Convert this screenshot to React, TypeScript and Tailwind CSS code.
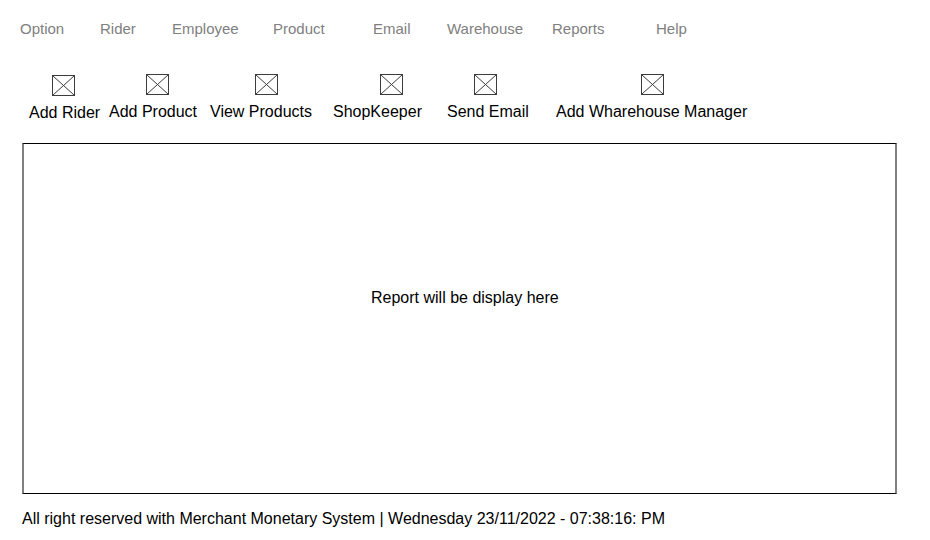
import React from 'react';

const menu = [
  { label: 'Option', w: 'w-[80px]' },
  { label: 'Rider', w: 'w-[72px]' },
  { label: 'Employee', w: 'w-[101px]' },
  { label: 'Product', w: 'w-[100px]' },
  { label: 'Email', w: 'w-[74px]' },
  { label: 'Warehouse', w: 'w-[105px]' },
  { label: 'Reports', w: 'w-[104px]' },
  { label: 'Help', w: 'w-[60px]' },
];

const tools = [
  { label: 'Add Rider', w: 'w-[80px]', icon: 'ml-[23px] mt-px', text: 'mt-[8px]' },
  { label: 'Add Product', w: 'w-[101px]', icon: 'ml-[37px]', text: 'mt-[8px]' },
  { label: 'View Products', w: 'w-[123px]', icon: 'ml-[45px]', text: 'mt-[8px]' },
  { label: 'ShopKeeper', w: 'w-[114px]', icon: 'ml-[47px]', text: 'mt-[8px]' },
  { label: 'Send Email', w: 'w-[109px]', icon: 'ml-[27px]', text: 'mt-[8px]' },
  { label: 'Add Wharehouse Manager', w: 'w-[220px]', icon: 'ml-[85px]', text: 'mt-[8px]' },
];

const MissingImage = ({ className }: { className: string }) => (
  <svg className={className} width="23" height="21" viewBox="0 0 23 21">
    <rect x="0.5" y="0.5" width="22" height="20" fill="none" stroke="#3c3c3c" />
    <line x1="1" y1="1" x2="22" y2="20" stroke="#3c3c3c" />
    <line x1="22" y1="1" x2="1" y2="20" stroke="#3c3c3c" />
  </svg>
);

const App = () => {
  return (
    <div className="w-[930px] h-[540px] bg-white overflow-hidden font-['Liberation_Sans',Arial,sans-serif]">
      <div className="flex pl-[20px] pt-[20px] text-[15px] leading-[17px] text-[#808080]">
        {menu.map((m) => (
          <div key={m.label} className={m.w}>
            {m.label}
          </div>
        ))}
      </div>

      <div className="flex pl-[29px] mt-[37px] text-[16px] leading-[18px] text-black">
        {tools.map((t) => (
          <div key={t.label} className={`${t.w} flex flex-col items-start whitespace-nowrap`}>
            <MissingImage className={t.icon} />
            <span className={t.text}>{t.label}</span>
          </div>
        ))}
      </div>

      <div className="ml-[22px] mt-[21px] w-[875px] h-[351px] border-t border-b border-t-black border-b-black border-l-2 border-r-2 border-l-[#808080] border-r-[#808080] pt-[145px] pl-[347px] text-[16px] leading-[18px] text-black">
        Report will be display here
      </div>

      <div className="pl-[22px] mt-[16px] text-[16px] leading-[18px] text-black">
        All right reserved with Merchant Monetary System | Wednesday 23/11/2022 - 07:38:16: PM
      </div>
    </div>
  );
};

export default App;
